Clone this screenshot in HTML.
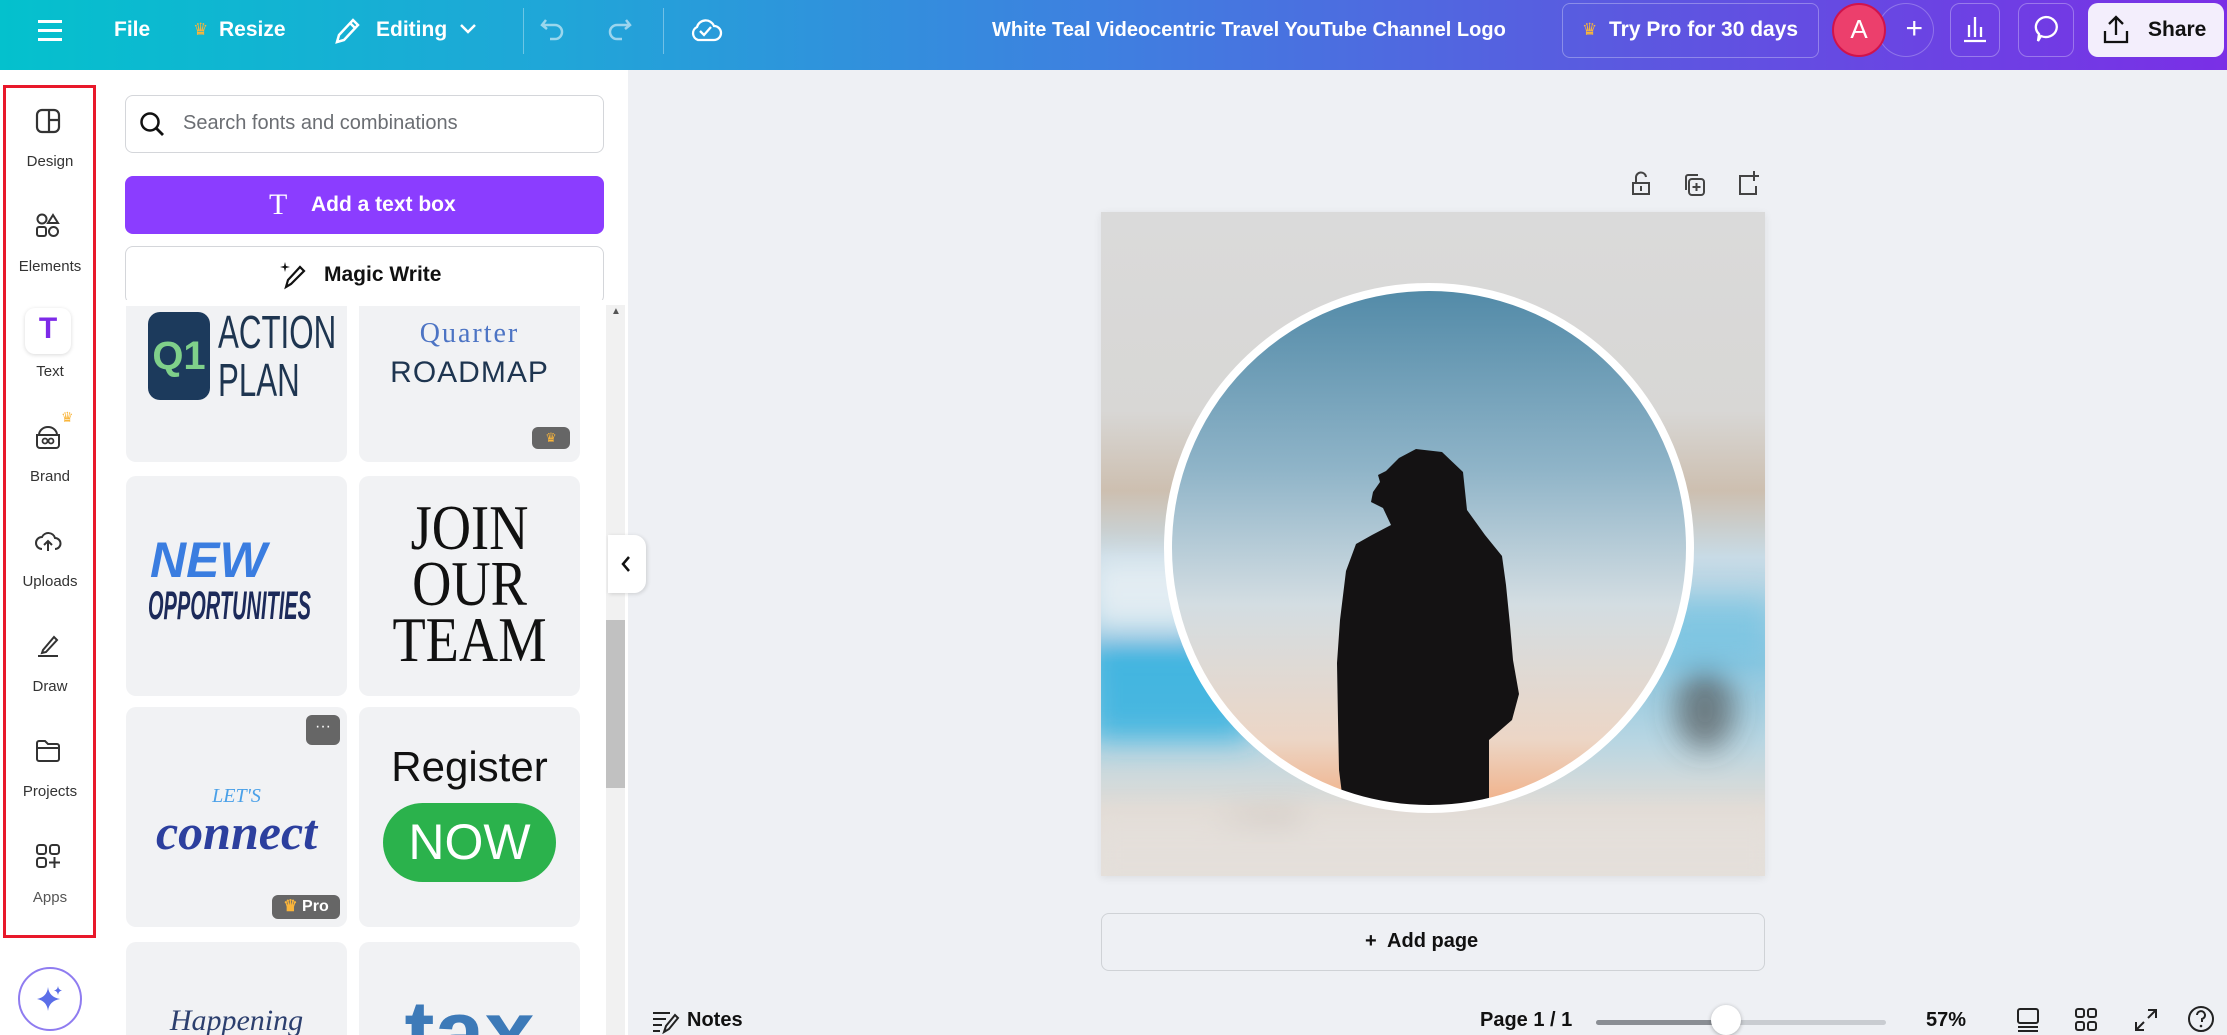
<!DOCTYPE html>
<html><head><meta charset="utf-8"><style>
*{box-sizing:border-box;margin:0;padding:0}
html{width:2227px;height:1035px;overflow:hidden}
body{width:2227px;height:1035px;overflow:hidden;background:#eef0f4;font-family:"Liberation Sans",sans-serif;position:relative}
.a{position:absolute}
.top{left:0;top:0;width:2227px;height:70px;background:linear-gradient(90deg,#04c1cd 0%,#20a6d8 25%,#3f7fe0 50%,#5a5ae0 72%,#7a2fe6 100%)}
.tw{color:#fff;font-weight:bold;font-size:21px;top:18px}
.rail{left:0;top:70px;width:96px;height:965px;background:#fff}
.lbl{width:96px;text-align:center;font-size:15px;color:#333}
.ic{left:34px;width:28px;height:28px}
.panel{left:96px;top:70px;width:532px;height:965px;background:#fff}
.card{background:#f1f2f4;border-radius:10px;overflow:hidden}
</style></head><body>
<div class="a top"></div>
<div class="a" style="left:38px;top:20px;width:24px;height:3px;background:#fff;box-shadow:0 9px 0 #fff,0 18px 0 #fff"></div>
<div class="a tw" style="left:114px">File</div>
<div class="a" style="left:193px;top:20px;color:#f9b53b;font-size:17px">♛</div>
<div class="a tw" style="left:219px">Resize</div>
<svg class="a" style="left:332px;top:15px" width="30" height="32" viewBox="0 0 30 32"><path d="M5 27 L7 20 L21 5 L26 10 L12 25 Z M18 8 L23 13" stroke="#fff" stroke-width="2.5" fill="none"/></svg>
<div class="a tw" style="left:376px">Editing</div>
<svg class="a" style="left:458px;top:22px" width="20" height="14"><path d="M3 3 L10 10 L17 3" stroke="#fff" stroke-width="2.5" fill="none"/></svg>
<div class="a" style="left:523px;top:8px;width:1px;height:46px;background:rgba(255,255,255,.35)"></div>
<svg class="a" style="left:538px;top:14px" width="30" height="32"><path d="M8 6 L4 11 L9 15 M4 11 H17 a7 7 0 0 1 0 14 H12" stroke="rgba(255,255,255,.55)" stroke-width="2.5" fill="none"/></svg>
<svg class="a" style="left:604px;top:14px" width="30" height="32"><path d="M22 6 L26 11 L21 15 M26 11 H13 a7 7 0 0 0 0 14 H18" stroke="rgba(255,255,255,.55)" stroke-width="2.5" fill="none"/></svg>
<div class="a" style="left:663px;top:8px;width:1px;height:46px;background:rgba(255,255,255,.35)"></div>
<svg class="a" style="left:688px;top:12px" width="36" height="36"><path d="M10 28 a7 7 0 0 1 -1 -13 a9 9 0 0 1 17 -1 a7 7 0 0 1 0 14 Z M12 19 l4 4 l7 -8" stroke="#fff" stroke-width="2.3" fill="none"/></svg>
<div class="a tw" style="left:992px;font-size:20px;top:19px">White Teal Videocentric Travel YouTube Channel Logo</div>
<div class="a" style="left:1562px;top:3px;width:257px;height:55px;border:1.5px solid rgba(255,255,255,.3);border-radius:8px"></div>
<div class="a" style="left:1582px;top:20px;color:#f9b53b;font-size:17px">♛</div>
<div class="a tw" style="left:1609px">Try Pro for 30 days</div>
<div class="a" style="left:1878px;top:3px;width:56px;height:54px;border-radius:50%;border:1.5px solid rgba(255,255,255,.25);color:#fff;font-size:30px;text-align:center;line-height:50px">&nbsp;&nbsp;+</div>
<div class="a" style="left:1832px;top:3px;width:54px;height:54px;border-radius:50%;background:#ec3f6c;border:2.5px solid #d0134b;color:#fff;font-size:26px;text-align:center;line-height:49px">A</div>
<div class="a" style="left:1950px;top:3px;width:50px;height:54px;border-radius:10px;border:1.5px solid rgba(255,255,255,.3)"></div>
<svg class="a" style="left:1960px;top:13px" width="30" height="32"><path d="M4 28 H26 M9 24 V12 M15 24 V4 M21 24 V14" stroke="#fff" stroke-width="2.3" fill="none"/></svg>
<div class="a" style="left:2018px;top:3px;width:56px;height:54px;border-radius:10px;border:1.5px solid rgba(255,255,255,.3)"></div>
<svg class="a" style="left:2030px;top:13px" width="32" height="34"><path d="M16 4 a11 10 0 1 1 -5 19 L8 28 L9 21 a11 10 0 0 1 7 -17 Z" stroke="#fff" stroke-width="2.3" fill="none"/></svg>
<div class="a" style="left:2088px;top:3px;width:136px;height:54px;border-radius:10px;background:#f3eefc"></div>
<svg class="a" style="left:2100px;top:13px" width="32" height="34"><path d="M16 22 V4 M9 11 L16 4 L23 11 M5 18 V29 H27 V18" stroke="#111" stroke-width="2.3" fill="none"/></svg>
<div class="a" style="left:2148px;top:18px;font-size:21px;font-weight:bold;color:#111">Share</div>

<div class="a rail"></div>
<div class="a" style="left:3px;top:85px;width:93px;height:853px;border:3px solid #e8182a"></div>
<svg class="a ic" style="top:107px" viewBox="0 0 28 28"><rect x="3" y="3" width="22" height="22" rx="5" stroke="#333" stroke-width="2.2" fill="none"/><path d="M15 3 V25 M15 13 H25" stroke="#333" stroke-width="2.2"/></svg>
<div class="a lbl" style="left:2px;top:153px">Design</div>
<svg class="a ic" style="top:212px" viewBox="0 0 28 28"><circle cx="8" cy="7" r="4.5" stroke="#333" stroke-width="2" fill="none"/><path d="M19 3 L24 11 H14 Z" stroke="#333" stroke-width="2" fill="none"/><rect x="3" y="15" width="9" height="9" rx="2" stroke="#333" stroke-width="2" fill="none"/><circle cx="19.5" cy="19.5" r="4.5" stroke="#333" stroke-width="2" fill="none"/></svg>
<div class="a lbl" style="left:2px;top:258px">Elements</div>
<div class="a" style="left:25px;top:308px;width:46px;height:46px;border-radius:10px;background:#fff;box-shadow:0 1px 4px rgba(0,0,0,.15)"></div>
<div class="a" style="left:25px;top:312px;width:46px;text-align:center;font-size:30px;font-weight:bold;color:#7d2ae8">T</div>
<div class="a lbl" style="left:2px;top:363px">Text</div>
<svg class="a ic" style="top:422px" viewBox="0 0 28 28"><path d="M5 13 a9 8 0 0 1 18 0 M3 13 H25 V23 a3 3 0 0 1 -3 3 H6 a3 3 0 0 1 -3 -3 Z" stroke="#333" stroke-width="2" fill="none"/><circle cx="11" cy="19" r="2.5" stroke="#333" stroke-width="1.8" fill="none"/><circle cx="17" cy="19" r="2.5" stroke="#333" stroke-width="1.8" fill="none"/></svg>
<div class="a" style="left:61px;top:409px;color:#f9b53b;font-size:14px">♛</div>
<div class="a lbl" style="left:2px;top:468px">Brand</div>
<svg class="a ic" style="top:527px" viewBox="0 0 28 28"><path d="M8 22 a6 6 0 0 1 0 -12 a7 7 0 0 1 13 1 a5 5 0 0 1 0 11 M14 24 V14 M10 18 L14 14 L18 18" stroke="#333" stroke-width="2" fill="none"/></svg>
<div class="a lbl" style="left:2px;top:573px">Uploads</div>
<svg class="a ic" style="top:631px" viewBox="0 0 28 28"><path d="M9 19 L20 6 L23 9 L12 21 L8 22 Z M4 25 H24" stroke="#333" stroke-width="2" fill="none"/></svg>
<div class="a lbl" style="left:2px;top:678px">Draw</div>
<svg class="a ic" style="top:737px" viewBox="0 0 28 28"><path d="M3 6 a2 2 0 0 1 2 -2 H11 L14 7 H23 a2 2 0 0 1 2 2 V22 a2 2 0 0 1 -2 2 H5 a2 2 0 0 1 -2 -2 Z M3 11 H25" stroke="#333" stroke-width="2" fill="none"/></svg>
<div class="a lbl" style="left:2px;top:783px">Projects</div>
<svg class="a ic" style="top:842px" viewBox="0 0 28 28"><rect x="3" y="3" width="9" height="9" rx="2.5" stroke="#333" stroke-width="2" fill="none"/><rect x="16" y="3" width="9" height="9" rx="2.5" stroke="#333" stroke-width="2" fill="none"/><rect x="3" y="16" width="9" height="9" rx="2.5" stroke="#333" stroke-width="2" fill="none"/><path d="M20.5 15 V26 M15 20.5 H26" stroke="#333" stroke-width="2"/></svg>
<div class="a lbl" style="left:2px;top:889px;color:#555">Apps</div>
<div class="a" style="left:18px;top:967px;width:64px;height:64px;border-radius:50%;border:2.5px solid #8f7cf0;background:#fff"></div>
<svg class="a" style="left:34px;top:983px" width="32" height="32"><path d="M14 4 Q15 14 26 16 Q15 18 14 28 Q13 18 3 16 Q13 14 14 4 Z" fill="#5b6ee8"/><path d="M24 3 Q24.5 7 28 7.5 Q24.5 8 24 12 Q23.5 8 20 7.5 Q23.5 7 24 3Z" fill="#5b6ee8"/></svg>

<div class="a panel"></div>
<div class="a" style="left:125px;top:95px;width:479px;height:58px;border:1.5px solid #d4d6da;border-radius:8px;background:#fff"></div>
<svg class="a" style="left:138px;top:110px" width="30" height="30"><circle cx="12" cy="12" r="8.5" stroke="#111" stroke-width="2.5" fill="none"/><path d="M18 18 L25 25" stroke="#111" stroke-width="2.8"/></svg>
<div class="a" style="left:183px;top:112px;font-size:20px;color:#6b6e73">Search fonts and combinations</div>
<div class="a" style="left:125px;top:176px;width:479px;height:58px;border-radius:8px;background:#8b3dff"></div>
<div class="a" style="left:269px;top:188px;font-size:30px;color:#fff;font-family:'Liberation Serif',serif">T</div>
<div class="a" style="left:311px;top:193px;font-size:21px;font-weight:bold;color:#fff">Add a text box</div>
<div class="a" style="left:125px;top:246px;width:479px;height:58px;border-radius:8px;border:1.5px solid #d4d6da;background:#fff"></div>
<svg class="a" style="left:278px;top:259px" width="32" height="32"><path d="M8 28 L10 21 L22 8 L26 12 L13 25 Z" stroke="#111" stroke-width="2.2" fill="none"/><path d="M7 3 L8 7 L12 8 L8 9 L7 13 L6 9 L2 8 L6 7Z" fill="#111"/></svg>
<div class="a" style="left:324px;top:263px;font-size:21px;font-weight:bold;color:#111">Magic Write</div>
<div class="a" style="left:606px;top:305px;width:19px;height:730px;background:#f1f1f1"></div>
<div class="a" style="left:606px;top:620px;width:19px;height:168px;background:#c1c1c1"></div>
<div class="a" style="left:611px;top:306px;font-size:10px;color:#555">▲</div>
<div class="a" style="left:96px;top:300px;width:510px;height:6px;background:#fff"></div>
<div class="a" style="left:96px;top:306px;width:510px;height:729px;overflow:hidden">
 <div class="a card" style="left:30px;top:-20px;width:221px;height:176px">
  <div class="a" style="left:22px;top:26px;width:62px;height:88px;background:#1c3a5c;border-radius:12px;color:#7fd08a;font-weight:bold;font-size:40px;text-align:center;line-height:88px">Q1</div>
  <div class="a" style="left:92px;top:22px;font-size:46px;line-height:48px;color:#1e3550;transform:scaleX(.68);transform-origin:left">ACTION<br>PLAN</div>
 </div>
 <div class="a card" style="left:263px;top:-20px;width:221px;height:176px">
  <div class="a" style="left:0;top:32px;width:221px;text-align:center;font-family:'Liberation Serif',serif;font-size:28px;color:#4d74c4;letter-spacing:2px">Quarter</div>
  <div class="a" style="left:0;top:70px;width:221px;text-align:center;font-size:30px;color:#1e3550;letter-spacing:1px">ROADMAP</div>
  <div class="a" style="left:173px;top:141px;width:38px;height:22px;border-radius:6px;background:#666;color:#f9b53b;font-size:13px;text-align:center;line-height:22px">♛</div>
 </div>
 <div class="a card" style="left:30px;top:170px;width:221px;height:220px">
  <div class="a" style="left:24px;top:55px;font-size:50px;font-weight:bold;font-style:italic;color:#3a7de0">NEW</div>
  <div class="a" style="left:22px;top:108px;font-size:40px;font-weight:bold;font-style:italic;color:#1c2a5a;transform:scaleX(.5);transform-origin:left;white-space:nowrap">OPPORTUNITIES</div>
 </div>
 <div class="a card" style="left:263px;top:170px;width:221px;height:220px">
  <div class="a" style="left:0;top:24px;width:221px;text-align:center;font-family:'Liberation Serif',serif;font-size:64px;line-height:56px;color:#111;transform:scaleX(.85)">JOIN<br>OUR<br>TEAM</div>
 </div>
 <div class="a card" style="left:30px;top:401px;width:221px;height:220px">
  <div class="a" style="left:180px;top:8px;width:34px;height:30px;border-radius:6px;background:#666;color:#fff;text-align:center;font-size:16px;line-height:24px">···</div>
  <div class="a" style="left:0;top:78px;width:221px;text-align:center;font-family:'Liberation Serif',serif;font-size:20px;font-style:italic;color:#4aa0e8">LET'S</div>
  <div class="a" style="left:0;top:96px;width:221px;text-align:center;font-family:'Liberation Serif',serif;font-size:50px;font-weight:bold;font-style:italic;color:#2c3f9e">connect</div>
  <div class="a" style="left:146px;top:188px;width:68px;height:24px;border-radius:6px;background:#666;color:#fff;font-size:16px;font-weight:bold;line-height:24px;text-align:center"><span style="color:#f9b53b">♛</span> Pro</div>
 </div>
 <div class="a card" style="left:263px;top:401px;width:221px;height:220px">
  <div class="a" style="left:0;top:36px;width:221px;text-align:center;font-size:42px;color:#111">Register</div>
  <div class="a" style="left:24px;top:96px;width:173px;height:79px;border-radius:40px;background:#2bb24c;color:#fff;font-size:50px;text-align:center;line-height:79px">NOW</div>
 </div>
 <div class="a card" style="left:30px;top:636px;width:221px;height:200px">
  <div class="a" style="left:0;top:62px;width:221px;text-align:center;font-family:'Liberation Serif',serif;font-size:30px;font-style:italic;color:#2c3f6e">Happening</div>
 </div>
 <div class="a card" style="left:263px;top:636px;width:221px;height:200px">
  <div class="a" style="left:0;top:40px;width:221px;text-align:center;font-size:90px;font-weight:bold;color:#3d7ab8">tax</div>
 </div>
</div>
<div class="a" style="left:608px;top:535px;width:38px;height:58px;background:#fff;border-radius:0 12px 12px 0;box-shadow:1px 1px 4px rgba(0,0,0,.15)"></div>
<svg class="a" style="left:618px;top:554px" width="16" height="20"><path d="M11 3 L5 10 L11 17" stroke="#111" stroke-width="2.5" fill="none"/></svg>

<svg class="a" style="left:1628px;top:170px" width="26" height="30"><path d="M5 13 V24 H21 V13 Z M8 13 V8 a5 5 0 0 1 10 -1" stroke="#444" stroke-width="2" fill="none"/><path d="M13 16 V21" stroke="#444" stroke-width="2"/></svg>
<svg class="a" style="left:1681px;top:170px" width="28" height="30"><rect x="8" y="9" width="15" height="16" rx="3" stroke="#444" stroke-width="2" fill="none"/><path d="M5 20 V7 a2 2 0 0 1 2 -2 H17 M15.5 13 V21 M11.5 17 H19.5" stroke="#444" stroke-width="2" fill="none"/></svg>
<svg class="a" style="left:1734px;top:168px" width="28" height="30"><path d="M15 8 H6 V26 H22 V18 M20 3 V13 M15 8 H25" stroke="#444" stroke-width="2" fill="none"/></svg>

<div class="a" style="left:1101px;top:212px;width:664px;height:664px;overflow:hidden;box-shadow:0 2px 8px rgba(0,0,0,.08)">
<svg width="664" height="664" viewBox="1101 212 664 664">
<defs>
<linearGradient id="bg" x1="0" y1="0" x2="0" y2="1"><stop offset="0" stop-color="#dadada"/><stop offset=".3" stop-color="#d8d7d5"/><stop offset=".42" stop-color="#cdbfb0"/><stop offset=".52" stop-color="#c8dbe6"/><stop offset=".68" stop-color="#8cc7e0"/><stop offset=".8" stop-color="#b9d6e2"/><stop offset=".9" stop-color="#e2dcd6"/><stop offset="1" stop-color="#e6dfd9"/></linearGradient>
<linearGradient id="sky" x1="0" y1="0" x2="0" y2="1"><stop offset="0" stop-color="#4f88a6"/><stop offset=".35" stop-color="#8fb4c8"/><stop offset=".6" stop-color="#d3dde2"/><stop offset=".85" stop-color="#ecd6c6"/><stop offset="1" stop-color="#f2a87a"/></linearGradient>
<clipPath id="cc"><circle cx="1429" cy="548" r="258"/></clipPath>
<filter id="bl"><feGaussianBlur stdDeviation="14"/></filter>
</defs>
<rect x="1101" y="212" width="664" height="664" fill="url(#bg)"/>
<g filter="url(#bl)">
<rect x="1090" y="640" width="160" height="100" fill="#2fb0e0" opacity=".8"/>
<rect x="1090" y="560" width="110" height="70" fill="#eef3f6" opacity=".8"/>
<path d="M1110 860 Q1180 810 1300 815 L1320 876 H1101Z" fill="#6a5040" opacity=".6"/>
<rect x="1090" y="820" width="690" height="70" fill="#e4dfda"/>
<ellipse cx="1705" cy="710" rx="30" ry="40" fill="#444" opacity=".6"/>
<rect x="1660" y="600" width="110" height="60" fill="#6cc2e2" opacity=".6"/>
</g>
<g clip-path="url(#cc)">
<rect x="1160" y="280" width="540" height="540" fill="url(#sky)"/>
<path d="M1416 449 L1399 458 L1386 471 L1378 475 L1380 482 L1373 492 L1371 502 L1383 508 L1391 525 L1372 535 L1356 544 L1346 571 L1340 620 L1337 663 L1338 720 L1339 770 L1344 810 L1489 810 L1489 740 L1512 720 L1519 694 L1513 660 L1510 625 L1506 585 L1502 556 L1485 535 L1467 510 L1463 472 L1442 452 Z" fill="#141213"/>
</g>
<circle cx="1429" cy="548" r="261" fill="none" stroke="#fff" stroke-width="8"/>
</svg>
</div>

<div class="a" style="left:1101px;top:913px;width:664px;height:58px;border:1.5px solid #cfd2d6;border-radius:8px;background:#eef0f4"></div>
<div class="a" style="left:1365px;top:930px;font-size:20px;font-weight:bold;color:#111">+&nbsp; Add page</div>

<svg class="a" style="left:650px;top:1008px" width="30" height="26"><path d="M3 5 H20 M3 11 H16 M3 17 H12 M3 23 H10 M14 24 L16 18 L25 7 L28 10 L19 21 Z" stroke="#222" stroke-width="2" fill="none"/></svg>
<div class="a" style="left:687px;top:1009px;font-size:20px;line-height:22px;font-weight:bold;color:#111">Notes</div>
<div class="a" style="left:1480px;top:1009px;font-size:20px;line-height:22px;font-weight:bold;color:#111">Page 1 / 1</div>
<div class="a" style="left:1596px;top:1020px;width:290px;height:5px;border-radius:3px;background:#c9ccd1"></div>
<div class="a" style="left:1596px;top:1020px;width:130px;height:5px;border-radius:3px;background:#8a8e94"></div>
<div class="a" style="left:1711px;top:1005px;width:30px;height:30px;border-radius:50%;background:#fff;box-shadow:0 1px 4px rgba(0,0,0,.3)"></div>
<div class="a" style="left:1926px;top:1009px;font-size:20px;line-height:22px;font-weight:bold;color:#111">57%</div>
<svg class="a" style="left:2014px;top:1006px" width="28" height="27"><rect x="4" y="3" width="20" height="14" rx="2" stroke="#222" stroke-width="2" fill="none"/><path d="M4 21 H24 M4 25 H24" stroke="#222" stroke-width="2"/></svg>
<svg class="a" style="left:2072px;top:1006px" width="28" height="27"><rect x="4" y="3" width="8" height="8" rx="2" stroke="#222" stroke-width="2" fill="none"/><rect x="16" y="3" width="8" height="8" rx="2" stroke="#222" stroke-width="2" fill="none"/><rect x="4" y="16" width="8" height="8" rx="2" stroke="#222" stroke-width="2" fill="none"/><rect x="16" y="16" width="8" height="8" rx="2" stroke="#222" stroke-width="2" fill="none"/></svg>
<svg class="a" style="left:2132px;top:1006px" width="28" height="27"><path d="M16 4 H24 V12 M24 4 L16 12 M12 24 H4 V16 M4 24 L12 16" stroke="#222" stroke-width="2" fill="none"/></svg>
<svg class="a" style="left:2186px;top:1004px" width="30" height="29"><circle cx="15" cy="15" r="12" stroke="#222" stroke-width="2" fill="none"/><path d="M11 11 a4 4 0 1 1 5 4 V18" stroke="#222" stroke-width="2" fill="none"/><circle cx="15" cy="22" r="1.3" fill="#222"/></svg>
</body></html>
